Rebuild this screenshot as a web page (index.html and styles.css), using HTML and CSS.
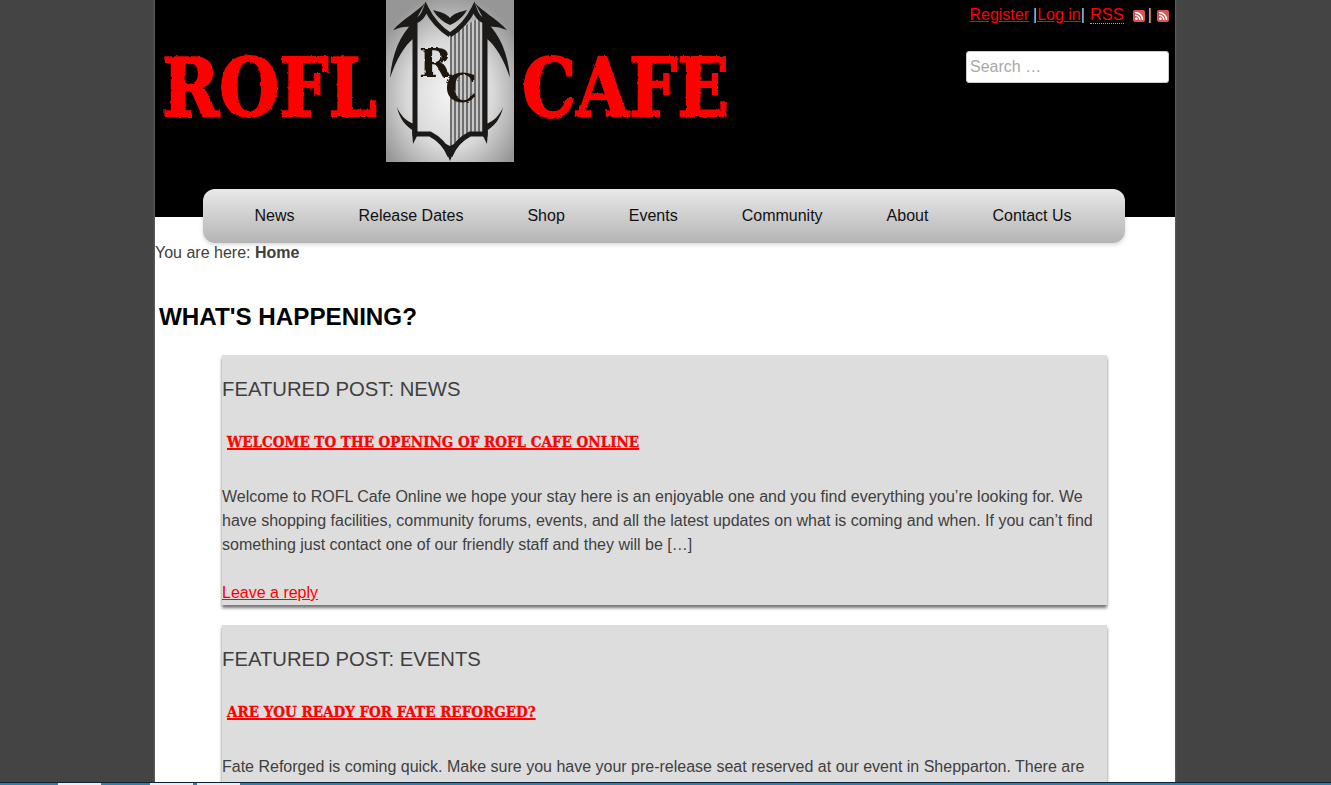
FILE: index.html
```html
<!DOCTYPE html>
<html lang="en">
<head>
    <meta charset="UTF-8">
    <meta name="viewport" content="width=device-width, initial-scale=1.0">
    <title>ROFL Cafe</title>
    <link rel="stylesheet" href="styles.css">
</head>
<body>
<div class="page">

    <!-- Header -->
    <header class="site-header">
        <a class="logo" href="#">
            <svg width="575" height="162" viewBox="0 0 575 162">
                <defs>
                    <filter id="rough" x="-5%" y="-5%" width="110%" height="110%">
                        <feTurbulence type="fractalNoise" baseFrequency="0.2" numOctaves="2" seed="4"/>
                        <feDisplacementMap in="SourceGraphic" scale="3"/>
                    </filter>
                    <radialGradient id="badge" cx="50%" cy="58%" r="62%">
                        <stop offset="0" stop-color="#f4f4f4"/>
                        <stop offset="0.55" stop-color="#d8d8d8"/>
                        <stop offset="1" stop-color="#969696"/>
                    </radialGradient>
                    <pattern id="stripes" width="4" height="4" patternUnits="userSpaceOnUse">
                        <rect width="4" height="4" fill="#c8c8c8"/>
                        <rect width="2" height="4" fill="#6e6e6e"/>
                    </pattern>
                    <g id="half">
                        <path class="frame" d="M29 21 L29 134 L44 134 C52 138 60 146 64 156"/>
                        <path class="frame" d="M29 21 C34 20 38 14 40 8 C46 20 56 30 64 35"/>
                        <path d="M39 3 C31 12 18 18 7 30 C14 27 20 26 27 27 L32 16 Z" fill="#1c1a18"/>
                        <path d="M28 22 C14 34 6 54 4 78 C10 60 18 46 28 38 Z" fill="#1c1a18"/>
                        <path d="M11 107 C13 118 20 127 28 131 L28 124 C20 121 14 115 11 107 Z" fill="#1c1a18"/>
                        <path d="M26 130 L32 134 L27 144 Z" fill="#1c1a18"/>
                        <path d="M64 161 C60 149 52 141 44 136 L64 146 Z" fill="#1c1a18"/>
                    </g>
                </defs>
                <text class="logo-word" transform="translate(7 116) scale(.87 1)" textLength="247" lengthAdjust="spacingAndGlyphs" filter="url(#rough)">ROFL</text>
                <text class="logo-word" transform="translate(367 116) scale(.86 1)" textLength="241" lengthAdjust="spacingAndGlyphs" filter="url(#rough)">CAFE</text>

                <!-- badge -->
                <rect x="231" y="0" width="128" height="162" fill="url(#badge)"/>
                <g transform="translate(231 0)">
                    <path d="M64 34 L100 14 L100 133 L84 134 L64 150 Z" fill="url(#stripes)"/>
                    <use href="#half"/>
                    <use href="#half" transform="translate(128 0) scale(-1 1)"/>
                    <path d="M47 10 C54 12 60 13 64 18 C68 13 74 12 81 10 C77 17 71 22 64 25 C57 22 51 17 47 10 Z" fill="#1c1a18"/>
                    <text class="badge-letter" x="33" y="77" filter="url(#rough)">R<tspan dx="-7" dy="25">C</tspan></text>
                </g>
            </svg>
        </a>

        <div class="header-right">
            <div class="header-links">
                <a href="#">Register</a><span class="sep sep-first">|</span><a href="#">Log in</a><span class="sep">|</span><abbr class="rss-label">RSS</abbr>
                <svg class="rss-icon rss-first" viewBox="0 0 12 12"><rect width="12" height="12" rx="2" fill="#d9534f"/><circle cx="3.4" cy="8.8" r="1.4" fill="#fff"/><path d="M2 5.2a4.8 4.8 0 0 1 4.8 4.8M2 2.4a7.6 7.6 0 0 1 7.6 7.6" fill="none" stroke="#fff" stroke-width="1.5"/></svg>
                <span class="sep sep-rss">|</span>
                <svg class="rss-icon" viewBox="0 0 12 12"><rect width="12" height="12" rx="2" fill="#d9534f"/><circle cx="3.4" cy="8.8" r="1.4" fill="#fff"/><path d="M2 5.2a4.8 4.8 0 0 1 4.8 4.8M2 2.4a7.6 7.6 0 0 1 7.6 7.6" fill="none" stroke="#fff" stroke-width="1.5"/></svg>
            </div>
            <input class="search" type="text" placeholder="Search …">
        </div>
    </header>

    <!-- Main menu -->
    <nav class="main-nav">
        <a href="#">News</a>
        <a href="#">Release Dates</a>
        <a href="#">Shop</a>
        <a href="#">Events</a>
        <a href="#">Community</a>
        <a href="#">About</a>
        <a href="#">Contact Us</a>
    </nav>

    <p class="breadcrumb">You are here: <strong>Home</strong></p>

    <h1 class="page-title">WHAT'S HAPPENING?</h1>

    <!-- Featured posts -->
    <article class="post">
        <h2 class="post-label">FEATURED POST: NEWS</h2>
        <h3 class="post-title"><a href="#">Welcome to the opening of ROFL Cafe Online</a></h3>
        <p class="post-text">Welcome to ROFL Cafe Online we hope your stay here is an enjoyable one and you find everything you’re looking for. We have shopping facilities, community forums, events, and all the latest updates on what is coming and when. If you can’t find something just contact one of our friendly staff and they will be […]</p>
        <a class="reply" href="#">Leave a reply</a>
    </article>

    <article class="post post-cut">
        <h2 class="post-label">FEATURED POST: EVENTS</h2>
        <h3 class="post-title"><a href="#">Are you ready for Fate Reforged?</a></h3>
        <p class="post-text">Fate Reforged is coming quick. Make sure you have your pre-release seat reserved at our event in Shepparton. There are</p>
    </article>
</div>

<!-- Strip of the desktop taskbar along the bottom edge -->
<div class="taskbar">
    <span class="task task-a"></span>
    <span class="task task-b"></span>
    <span class="task task-c"></span>
</div>
</body>
</html>
```

FILE: styles.css
```css
html, body {
    height: 100%;
    overflow: hidden;
}

body {
    margin: 0;
    background-color: #444;
    font-family: "Liberation Sans", Arial, sans-serif;
    font-size: 16px;
    color: #404040;
}

a {
    color: #f00;
}

.page {
    width: 1020px;
    height: 785px;
    margin-left: 155px;
    background-color: #fff;
    box-shadow: 0 0 2px #888;
    overflow: hidden;
}

/* Header */
.site-header {
    display: flex;
    justify-content: space-between;
    height: 217px;
    background-color: #000;
}

.logo {
    display: block;
    height: 162px;
}

.logo svg {
    display: block;
}

.logo-word {
    font-family: "DejaVu Serif", serif;
    font-weight: bold;
    font-size: 80px;
    fill: #f00;
    stroke: #f00;
    stroke-width: 2px;
}

.frame {
    fill: none;
    stroke: #1c1a18;
    stroke-width: 5px;
}

.badge-letter {
    font-family: "DejaVu Serif", serif;
    font-weight: bold;
    font-size: 40px;
    fill: #1c1410;
}

.header-right {
    display: flex;
    flex-direction: column;
    align-items: flex-end;
    padding-right: 6px;
}

.header-links {
    display: flex;
    align-items: center;
    height: 29px;
    color: #ccd;
    font-size: 16px;
}

.sep-first {
    margin-left: 4px;
}

.rss-label {
    color: #f00;
    font-size: 16.5px;
    border-bottom: 1px dotted #aaa;
    line-height: 18px;
    margin-left: 5px;
}

.rss-icon {
    width: 12px;
    height: 12px;
    margin-top: 2px;
}

.rss-first {
    margin-left: 9px;
}

.sep-rss {
    margin: 0 5px 0 3px;
}

.search {
    box-sizing: border-box;
    width: 203px;
    height: 32px;
    margin-top: 22px;
    padding: 0 3px;
    border: 1px solid #ccc;
    border-radius: 3px;
    background-color: #fff;
    font-family: inherit;
    font-size: 16px;
}

.search::placeholder {
    color: #a9a9a9;
}

/* Menu */
.main-nav {
    display: flex;
    justify-content: center;
    gap: 64px;
    box-sizing: border-box;
    width: 922px;
    height: 54px;
    margin: -28px 0 0 48px;
    padding-right: 2px;
    border-radius: 12px;
    background: linear-gradient(#e9e9e9, #b4b4b4);
    box-shadow: 0 2px 4px rgba(0, 0, 0, 0.15);
    line-height: 54px;
    position: relative;
}

.main-nav a {
    color: #111;
    text-decoration: none;
}

.breadcrumb {
    margin: 0;
    line-height: 19px;
}

.page-title {
    margin: 40px 0 0 4px;
    font-size: 24.2px;
    line-height: 30px;
    color: #000;
}

/* Posts */
.post {
    width: 885px;
    margin: 23px 0 0 67px;
    background-color: #ddd;
    box-shadow: 0 3px 3px rgba(0, 0, 0, 0.55);
}

.post + .post {
    margin-top: 20px;
}

.post-cut {
    padding-bottom: 40px;
}

.post-label {
    margin: 0;
    padding-top: 21px;
    font-size: 20.3px;
    font-weight: normal;
    line-height: 26px;
}

.post-title {
    margin: 28px 0 0 5px;
    font-family: "DejaVu Serif", serif;
    font-stretch: condensed;
    font-size: 15px;
    line-height: 24px;
    text-transform: uppercase;
    -webkit-text-stroke: 0.3px #f00;
}

.post-title a {
    text-decoration-thickness: 2px;
}

.post-text {
    margin: 31px 0 0;
    line-height: 24px;
}

.reply {
    display: block;
    margin-top: 24px;
    line-height: 24px;
    height: 24px;
}

/* Taskbar strip */
.taskbar {
    position: fixed;
    left: 0;
    right: 0;
    bottom: 0;
    height: 3px;
    background-color: #2d7fb0;
    border-top: 1px solid #123;
    box-sizing: border-box;
}

.task {
    position: absolute;
    top: 0;
    height: 3px;
    width: 43px;
    background-color: #e8eef2;
}

.task-a {
    left: 58px;
}

.task-b {
    left: 150px;
}

.task-c {
    left: 197px;
}
```
